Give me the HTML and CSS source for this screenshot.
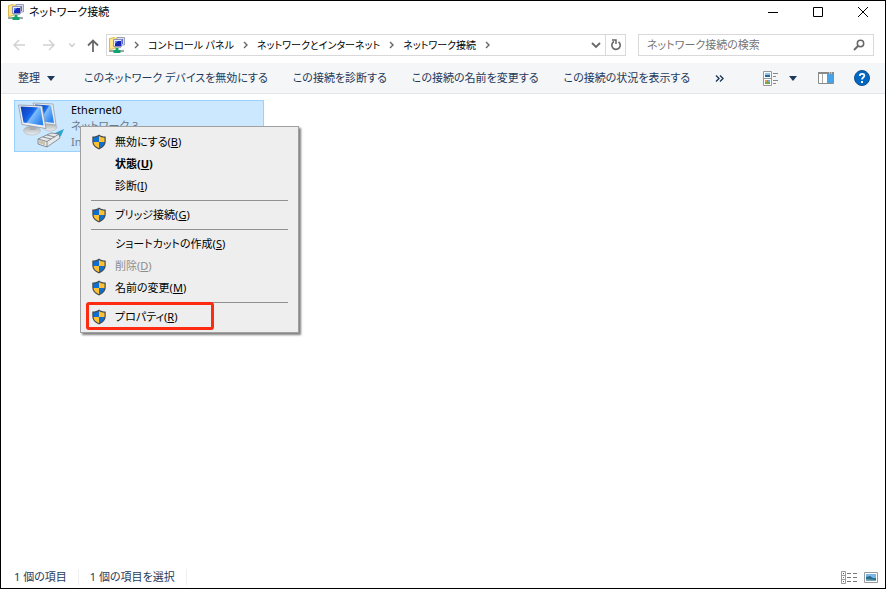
FILE: index.html
```html
<!DOCTYPE html>
<html lang="ja">
<head>
    <meta charset="UTF-8">
    <meta name="viewport" content="width=device-width, initial-scale=1.0">
    <title>ネットワーク接続</title>
    <link rel="stylesheet" href="styles.css">
</head>
<body>

<!-- Shared icons -->
<svg class="defs" aria-hidden="true">
    <symbol id="shield" viewBox="0 0 14 16">
        <path d="M7 .5C5.200 1.900 3 2.500.3 2.500v5c0 3.700 2.900 6.400 6.700 8 3.800-1.600 6.700-4.300 6.700-8v-5C11 2.500 8.800 1.900 7 .5z" fill="#454b52"/>
        <path d="M7 2C5.500 3.100 3.700 3.600 1.500 3.700V8H7z" fill="#0f6fd1"/>
        <path d="M7 2c1.500 1.100 3.300 1.600 5.500 1.700V8H7z" fill="#ffc031"/>
        <path d="M1.500 8c.2 2.800 2.300 4.800 5.500 6.300V8z" fill="#ffc031"/>
        <path d="M12.500 8c-.2 2.800-2.300 4.800-5.500 6.300V8z" fill="#0f6fd1"/>
    </symbol>
    <symbol id="network" viewBox="0 0 16 16">
        <path d="M.5 1.500l5-1v11l-5 1z" fill="#ffe68c" stroke="#d9b650"/>
        <path d="M5 .5h4v10H5z" fill="#f6d773"/>
        <path d="M8 .5h7.500v7.500H8z" fill="#dce0ec" stroke="#9aa0b8"/>
        <path d="M9.500 2H14v5H9.500z" fill="#5a6fd8"/>
        <path d="M4.500 2.500h8v7h-8z" fill="#e8ebf5" stroke="#8d94b5"/>
        <path d="M6 4h6v5H6z" fill="#1826b8"/>
        <path d="M6 4h3L6 7z" fill="#5b83f2"/>
        <path d="M6 10h6v1H6z" fill="#b0b5c6"/>
        <path d="M0 14h15" stroke="#9ba8aa" stroke-width="2"/>
        <path d="M6.500 11h3v2h2v3h-7v-3h2z" fill="#12a468"/>
    </symbol>
    <symbol id="chevron" viewBox="0 0 5 8">
        <path d="M1 1l3 3-3 3" fill="none" stroke="#666" stroke-width="1.400"/>
    </symbol>
</svg>

<div class="window">
    <header class="titlebar">
        <svg class="icon16"><use href="#network"/></svg>
        <h1 class="title">ネットワーク接続</h1>
        <div class="window-buttons">
            <button aria-label="最小化"><svg width="10" height="10"><path d="M0 5.500h10" stroke="#000"/></svg></button>
            <button aria-label="最大化"><svg width="10" height="10"><path d="M.5.5h9v9h-9z" fill="none" stroke="#000"/></svg></button>
            <button aria-label="閉じる"><svg width="10" height="10"><path d="M0 0l10 10M10 0L0 10" stroke="#000"/></svg></button>
        </div>
    </header>

    <nav class="navbar">
        <div class="history">
            <button aria-label="戻る" disabled><svg width="12" height="12"><path d="M12 6H1M6 1L1 6l5 5" fill="none" stroke="#d2d2d2" stroke-width="1.500"/></svg></button>
            <button aria-label="進む" disabled><svg width="12" height="12"><path d="M0 6h11M6 1l5 5-5 5" fill="none" stroke="#d2d2d2" stroke-width="1.500"/></svg></button>
            <button class="recent" aria-label="最近表示した場所" disabled><svg width="6" height="4"><path d="M0 .5l3 3 3-3" fill="none" stroke="#ccc" stroke-width="1.300"/></svg></button>
            <button class="up" aria-label="上へ"><svg width="12" height="13"><path d="M6 13V2M1 6.500l5-5 5 5" fill="none" stroke="#686868" stroke-width="1.800"/></svg></button>
        </div>
        <div class="address">
            <svg class="icon16"><use href="#network"/></svg>
            <svg class="chevron"><use href="#chevron"/></svg>
            <a href="#">コントロール パネル</a>
            <svg class="chevron"><use href="#chevron"/></svg>
            <a href="#">ネットワークとインターネット</a>
            <svg class="chevron"><use href="#chevron"/></svg>
            <a href="#">ネットワーク接続</a>
            <svg class="chevron"><use href="#chevron"/></svg>
            <button class="address-drop" aria-label="以前の場所"><svg width="10" height="7"><path d="M1 1l4 4 4-4" fill="none" stroke="#686868" stroke-width="1.800"/></svg></button>
            <button class="refresh" aria-label="更新"><svg width="12" height="12"><path d="M4 2.500a4.200 4.200 0 1 0 4.500.3" fill="none" stroke="#666" stroke-width="1.600"/><path d="M2 1h4v4" fill="none" stroke="#666" stroke-width="1.500"/></svg></button>
        </div>
        <label class="search">
            <input type="search" placeholder="ネットワーク接続の検索" aria-label="ネットワーク接続の検索">
            <svg width="12" height="12"><circle cx="7.500" cy="4.500" r="3.200" fill="none" stroke="#666" stroke-width="1.500"/><path d="M5 7L1 11" stroke="#666" stroke-width="1.800"/></svg>
        </label>
    </nav>

    <div class="toolbar">
        <button class="organize">整理 <svg width="8" height="5"><path d="M0 0h8L4 5z" fill="#1e395b"/></svg></button>
        <button>このネットワーク デバイスを無効にする</button>
        <button>この接続を診断する</button>
        <button>この接続の名前を変更する</button>
        <button>この接続の状況を表示する</button>
        <button aria-label="その他"><svg width="9" height="7"><path d="M1 .5l3 3-3 3M5 .5l3 3-3 3" fill="none" stroke="#1e395b" stroke-width="1.400"/></svg></button>
        <div class="toolbar-right">
            <button aria-label="表示方法"><svg width="15" height="15"><path d="M.5.5h8v14h-8zM.5 7.500h8" fill="#fff" stroke="#999"/><path d="M2 2h5v2H2z" fill="#8bc5f4"/><path d="M2 4h5v2H2z" fill="#2a699b"/><path d="M2 9h5v4H2z" fill="#72aa47"/><path d="M2 9h2v2H2z" fill="#e89b4c"/><path d="M5 9h2v2H5z" fill="#6aaee8"/><path d="M10 2.500h5M10 5.500h3M10 9.500h5M10 12.500h3" stroke="#888"/></svg></button>
            <button aria-label="その他の表示方法"><svg width="8" height="5"><path d="M0 0h8L4 5z" fill="#1e395b"/></svg></button>
            <button class="preview" aria-label="プレビュー ウィンドウ"><svg width="16" height="12"><path d="M.5.500h15v11H.5z" fill="#fff" stroke="#8a8a8a"/><path d="M0 1h16" stroke="#8a8a8a" stroke-width="2"/><path d="M4.500 2v9" stroke="#aaa"/><path d="M9 2h6v9H9z" fill="#48a2e8"/><path d="M11 1h1M13 1h1" stroke="#fff"/></svg></button>
            <button aria-label="ヘルプ"><svg width="16" height="16"><circle cx="8" cy="8" r="7.500" fill="#0067c5" stroke="#164f88"/><path d="M5.800 6c0-3 4.700-2.800 4.500-.2C10.200 7.500 8 7.500 8 9.500" fill="none" stroke="#fff" stroke-width="1.800"/><path d="M7 11h2v2H7z" fill="#fff"/></svg></button>
        </div>
    </div>

    <main class="content">
        <div class="connection">
            <svg class="connection-icon" viewBox="0 0 48 48">
                <defs>
                    <linearGradient id="screen" x1="0" y1="0" x2="1" y2=".6">
                        <stop offset="0" stop-color="#0a3fb5"/>
                        <stop offset=".4" stop-color="#1257dc"/>
                        <stop offset=".55" stop-color="#1f6fee"/>
                        <stop offset=".6" stop-color="#7fbcfb"/>
                        <stop offset="1" stop-color="#2f86f0"/>
                    </linearGradient>
                    <linearGradient id="base" x1="0" y1="0" x2="0" y2="1">
                        <stop offset="0" stop-color="#a5abb0"/>
                        <stop offset="1" stop-color="#eceeef"/>
                    </linearGradient>
                </defs>
                <!-- back monitor -->
                <ellipse cx="32" cy="25" rx="7" ry="4" fill="url(#base)" stroke="#b1b7ba" stroke-width=".6"/>
                <path d="M15 1l20 1 3 21-18-2z" fill="#e9edf0" stroke="#97a1ab" stroke-width=".8"/>
                <path d="M17 2.500l16 1 3 17.500-16-2z" fill="url(#screen)"/>
                <!-- front monitor -->
                <ellipse cx="14" cy="28.500" rx="8.500" ry="4.500" fill="url(#base)" stroke="#b1b7ba" stroke-width=".6"/>
                <path d="M10 22h7l1 6h-6z" fill="#a9afb4"/>
                <path d="M.5 3l23.500 1 4 22.500L4 22.500z" fill="#eef1f3" stroke="#8d98a3" stroke-width=".8"/>
                <path d="M2.500 4.500l20 1 3 18-20-3z" fill="url(#screen)"/>
                <!-- network plug -->
                <path d="M37 31l9-4-3 7-5 2z" fill="#2fa5cf"/>
                <path d="M20 37l13-6 8 1 1 4-13 9-9-3z" fill="#e7eaeb" stroke="#74797d" stroke-width=".8"/>
                <path d="M20 37l9 2.500L41 32M29 39.500V45M25 35l8 2M29 33l8 2" fill="none" stroke="#74797d" stroke-width=".8"/>
                <path d="M22 38.500v3M24 39v3M26 39.500v3.500" stroke="#a08a4d" stroke-width=".8"/>
            </svg>
            <div class="connection-text">
                <div class="name">Ethernet0</div>
                <div>ネットワーク 3</div>
                <div>Intel</div>
            </div>
            <ul class="menu">
                <li><button><svg class="shield"><use href="#shield"/></svg><span>無効にする(<u>B</u>)</span></button></li>
                <li><button class="default"><span>状態(<u>U</u>)</span></button></li>
                <li><button><span>診断(<u>I</u>)</span></button></li>
                <li class="separator"></li>
                <li><button><svg class="shield"><use href="#shield"/></svg><span>ブリッジ接続(<u>G</u>)</span></button></li>
                <li class="separator"></li>
                <li><button><span>ショートカットの作成(<u>S</u>)</span></button></li>
                <li><button disabled><svg class="shield"><use href="#shield"/></svg><span>削除(<u>D</u>)</span></button></li>
                <li><button><svg class="shield"><use href="#shield"/></svg><span>名前の変更(<u>M</u>)</span></button></li>
                <li class="separator"></li>
                <li class="marked"><button><svg class="shield"><use href="#shield"/></svg><span>プロパティ(<u>R</u>)</span></button></li>
            </ul>
        </div>
    </main>

    <footer class="statusbar">
        <span>1 個の項目</span>
        <span>1 個の項目を選択</span>
        <div class="view-buttons">
            <button aria-label="詳細"><svg width="16" height="13"><path d="M.5.5h4v12h-4zM.5 4.500h4M.5 8.500h4" fill="#fff" stroke="#999"/><path d="M2 2.500h1" stroke="#555"/><path d="M2 6.500h1" stroke="#2f82d6"/><path d="M2 10.500h1" stroke="#d03030"/><path d="M6 2.500h4M12 2.500h4M6 6.500h4M12 6.500h4M6 10.500h4M12 10.500h4" stroke="#777"/></svg></button>
            <button aria-label="大アイコン"><svg width="14" height="11"><path d="M.5.5h13v10H.5z" fill="#fff" stroke="#999"/><path d="M2 2h10v4H2z" fill="#79b7e8"/><path d="M2 5l4-1 3 2h3v3H2z" fill="#296b8b"/><path d="M2 7l10 1v1H2z" fill="#78a6b8"/></svg></button>
        </div>
    </footer>
</div>

</body>
</html>
```

FILE: styles.css
```css
*, *::after {
    box-sizing: border-box;
}
body {
    margin: 0;
    font: 12px/16px "Noto Sans", "Noto Sans CJK JP", sans-serif;
    font-feature-settings: "palt";
    color: #000;
}
svg {
    display: block;
    flex: none;
}
button {
    display: flex;
    align-items: center;
    justify-content: center;
    padding: 0;
    border: 0;
    background: none;
    color: inherit;
    font: inherit;
    font-feature-settings: inherit;
    white-space: nowrap;
}
.defs {
    position: absolute;
    width: 0;
    height: 0;
}
.window {
    display: flex;
    flex-direction: column;
    min-height: 100vh;
    border: 1px solid #000;
    background: #fff;
}
.icon16 {
    width: 16px;
    height: 16px;
}

/* Title bar */
.titlebar {
    display: flex;
    align-items: center;
    height: 22px;
    padding-left: 7px;
}
.title {
    margin: 0 0 0 5px;
    font-size: 11px;
    font-weight: normal;
}
.window-buttons {
    display: flex;
    margin-left: auto;
}
.window-buttons button {
    width: 45px;
    height: 22px;
}

/* Address row */
.navbar {
    display: flex;
    align-items: center;
    height: 40px;
    padding: 4px 11px 0 12px;
}
.history {
    display: flex;
    align-items: center;
    width: 93px;
    gap: 18px;
}
.history .recent {
    margin-left: -4px;
}
.history .up {
    margin-left: -6px;
}
.address {
    display: flex;
    flex: 1;
    align-items: center;
    height: 22px;
    padding-left: 2px;
    border: 1px solid #d9d9d9;
    font-size: 10px;
}
.address a {
    color: #000;
    text-decoration: none;
    white-space: nowrap;
}
.chevron {
    width: 5px;
    height: 8px;
    margin: 0 9px;
}
.address-drop {
    width: 18px;
    height: 20px;
    margin-left: auto;
}
.refresh {
    width: 20px;
    height: 20px;
    border-left: 1px solid #d9d9d9;
}
.search {
    display: flex;
    align-items: center;
    width: 236px;
    height: 22px;
    margin-left: 12px;
    padding: 0 8px;
    border: 1px solid #d9d9d9;
}
.search input {
    flex: 1;
    min-width: 0;
    padding: 0;
    border: 0;
    outline: 0;
    background: none;
    font: inherit;
    font-size: 11px;
    font-feature-settings: inherit;
}
.search input::placeholder {
    color: #767676;
}

/* Command bar */
.toolbar {
    display: flex;
    align-items: center;
    gap: 25px;
    height: 31px;
    padding: 0 15px 0 17px;
    border-bottom: 1px solid #e3e6ea;
    background: #f5f6f7;
    color: #1e395b;
    font-size: 11px;
}
.organize {
    gap: 7px;
    margin-right: 4px;
}
.toolbar-right {
    display: flex;
    align-items: center;
    gap: 11px;
    margin-left: auto;
}
.toolbar-right .preview {
    margin: 0 9px 0 10px;
}

/* Connection tile */
.content {
    flex: 1;
    padding: 6px 13px;
}
.connection {
    position: relative;
    display: flex;
    width: 250px;
    height: 52px;
    border: 1px solid #99d1ff;
    background: #cce8ff;
}
.connection-icon {
    width: 48px;
    height: 48px;
    margin: 1px 5px 0 3px;
}
.connection-text {
    padding-top: 1px;
    color: #6d7b87;
    font-size: 11px;
}
.connection-text .name {
    color: #000;
}

/* Context menu */
.menu {
    position: absolute;
    top: 25px;
    left: 65px;
    width: 219px;
    margin: 0;
    padding: 4px 0;
    border: 1px solid #a0a0a0;
    background: #eee;
    box-shadow: 2px 2px 2px rgba(0, 0, 0, 0.5);
    list-style: none;
}
.menu li {
    position: relative;
}
.menu button {
    position: relative;
    justify-content: flex-start;
    width: 100%;
    height: 22px;
    padding-left: 34px;
    font-size: 11px;
}
.menu button:disabled {
    color: #8d8d8d;
}
.menu .default {
    font-weight: bold;
}
.shield {
    width: 14px;
    height: 16px;
    margin: 0 9px 0 -23px;
}
.menu .separator {
    height: 1px;
    margin: 3px 10px;
    background: #919191;
}
.marked::after {
    content: "";
    position: absolute;
    top: -4px;
    left: 5px;
    width: 128px;
    height: 28px;
    border: 3px solid #ff2a12;
    border-radius: 3px;
}

/* Status bar */
.statusbar {
    display: flex;
    align-items: center;
    height: 22px;
    padding: 0 7px 0 13px;
    color: #1e395b;
    font-size: 11px;
}
.statusbar span {
    margin-right: 11px;
    padding-right: 11px;
    border-right: 1px solid #f0f0f0;
}
.view-buttons {
    display: flex;
    gap: 7px;
    margin-left: auto;
}
```
